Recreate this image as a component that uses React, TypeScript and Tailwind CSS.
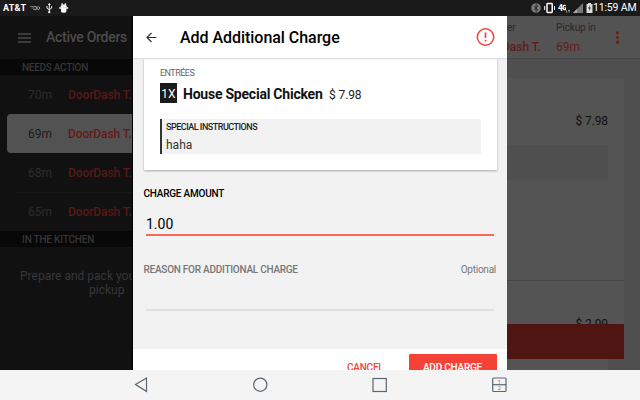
import React from "react";

function Order({ time, selected = false, last = false }: { time: string; selected?: boolean; last?: boolean }) {
  return (
    <div className={`ml-[7px] flex shrink-0 items-center whitespace-nowrap pl-[21px] ${last ? "h-[38px]" : "h-[39px]"} ${selected ? "rounded-l bg-[#525252]" : ""}`}>
      <span className={`w-10 shrink-0 text-[12px] ${selected ? "text-[#1a1a1a]" : "text-[#2d2d2d]"}`}>{time}</span>
      <span className={`text-[12px] font-medium tracking-[-0.1px] ${selected ? "text-[#651a16]" : "text-[#571a17]"}`}>DoorDash T.</span>
    </div>
  );
}

function StatusBar() {
  return (
    <header className="flex h-4 shrink-0 items-center bg-[#1a1a1a] pl-[3px] pr-[5px] text-white">
      <span className="w-[27px] pt-[1px] text-[9px] font-bold tracking-[0.2px]">AT&amp;T</span>
      <svg className="h-4 w-10" viewBox="30 0 40 16" fill="none" stroke="#fff">
        <path d="M30 6.500h6M31.500 8h4M33 9.500h3" stroke="#888" strokeWidth=".8" />
        <path d="M34.500 6.500h1.700q1.600 1.600 0 3.200h-1.200" stroke="#999" />
        <circle cx="38.300" cy="8.100" r="1.400" stroke="#999" />
        <path d="M49.300 4v8M47 6v2.300l2.300 1.400 2.300-1.500V6" strokeWidth=".9" />
        <path d="m47.800 5 1.500-2 1.500 2z" fill="#fff" stroke="none" />
        <circle cx="49.300" cy="12.200" r="1.100" fill="#fff" stroke="none" />
        <path d="M60.500 7q0-2.500 3.200-2.500T66.900 7zM61 7.600h5.400v3.800q0 1.400-2.700 1.400T61 11.400z" fill="#fff" stroke="none" />
        <path d="M59.200 8h9M61.600 3.500l1 1.200M65.800 3.500l-1 1.200" strokeWidth="1.400" />
      </svg>
      <svg className="ml-auto h-4 w-[36px]" viewBox="530 0 36 16" fill="none">
        <circle cx="536" cy="8" r="4.800" fill="#777" />
        <path d="m534.200 6.200 3.600 3.600-1.800 1.700v-7l1.800 1.700-3.600 3.600" stroke="#222" strokeWidth=".8" />
        <rect x="547" y="3.500" width="5.200" height="9" rx=".7" stroke="#fff" strokeWidth="1.500" />
        <path d="M544.700 6v4M554.500 6v4" stroke="#fff" />
        <text x="558" y="11" fill="#fff" fontSize="8.500" fontWeight="700" fontFamily="Roboto, sans-serif">4</text>
        <path d="M565.700 5.700q-2.700-1-2.700 1.800t2.700 2V7.800h-1.300" stroke="#fff" strokeWidth="1.300" />
      </svg>
      <svg className="h-4 w-[27px]" viewBox="566 0 27 16" fill="none">
        <path d="M566.300 10v2.300h1M568 10.500h2M569 10.500v2" stroke="#ccc" strokeWidth=".7" />
        <path d="M583 3v10h-10z" fill="#777" />
        <path d="M577 9v4h-4z" fill="#aaa" />
        <path d="M586.500 4h1.500V3h3v1h1.500v9h-6z" fill="#ddd" />
        <path d="m590 5-2 3.500h1.500l-.8 3 2.300-4h-1.500z" fill="#333" />
      </svg>
      <span className="w-[42px] whitespace-nowrap text-[10.500px] tracking-[-0.17px]">11:59 AM</span>
    </header>
  );
}

function Sidebar() {
  return (
    <aside className="flex w-[133px] shrink-0 flex-col overflow-hidden border-r border-black bg-[#111]">
      <div className="flex h-[43px] shrink-0 items-center whitespace-nowrap pl-[18px]">
        <svg className="h-[10px] w-[13px]" viewBox="0 0 13 10" stroke="#484848" strokeWidth="1.400"><path d="M0 1h13M0 5h13M0 9h13" /></svg>
        <span className="ml-[15px] text-[14px] font-medium tracking-[-0.28px] text-[#4b4b4b]">Active Orders</span>
      </div>
      <div className="flex h-4 shrink-0 items-center bg-[#080808] pl-[22px] text-[10px] font-medium tracking-[-0.28px] text-[#363636]">NEEDS ACTION</div>
      <Order time="70m" />
      <Order time="69m" selected />
      <Order time="68m" />
      <div className="ml-[17px] h-px shrink-0 bg-[#171717]" />
      <Order time="65m" last />
      <div className="flex h-4 shrink-0 items-center bg-[#080808] pl-[22px] text-[10px] font-medium tracking-[-0.2px] text-[#363636]">IN THE KITCHEN</div>
      <p className="ml-5 mt-[22px] whitespace-nowrap text-[12px] leading-[14px] text-[#373737]">
        Prepare and pack your<br /><span className="ml-[69px]">pickup</span>
      </p>
    </aside>
  );
}

function ChargeDialog() {
  return (
    <main className="flex w-[374px] shrink-0 flex-col overflow-hidden bg-[#f2f2f2]">
      <div className="z-10 flex h-[42px] shrink-0 items-center bg-white pl-[13px] pr-3 pt-[1px] shadow-[0_1px_1px_#ddd]">
        <svg className="h-[11px] w-[11px]" viewBox="0 0 11 11" fill="none" stroke="#333" strokeWidth="1.200"><path d="M10.500 5.500H1M5.500 1 1 5.500 5.500 10" /></svg>
        <h1 className="ml-[23px] whitespace-nowrap pt-[1px] text-[16px] font-medium tracking-[-0.04px] text-black">Add Additional Charge</h1>
        <svg className="ml-auto h-[19px] w-[19px]" viewBox="0 0 19 19" fill="none" stroke="#f44336"><circle cx="9.500" cy="9" r="8.200" strokeWidth="1.500" /><path d="M9.500 4.500v5.500M9.500 11.800v1.700" strokeWidth="1.700" /></svg>
      </div>
      <section className="mx-[10.500px] h-[112px] shrink-0 bg-white pl-[16.500px] pr-4 shadow-[0_1px_2px_#aaa]">
        <div className="pt-[9px] text-[9px] leading-3 tracking-[-0.52px] text-[#666]">ENTRÉES</div>
        <div className="mt-[4px] flex h-5 items-center whitespace-nowrap">
          <span className="flex h-5 w-[17px] items-center justify-center bg-[#1b1b1b] pt-[1px] text-[12px] text-white">1X</span>
          <strong className="ml-[6px] w-[146px] pt-[2px] text-[14px] font-bold tracking-[-0.23px] text-[#111]">House Special Chicken</strong>
          <span className="pt-[3px] text-[12px] tracking-[-0.1px] text-[#222]">$ 7.98</span>
        </div>
        <div className="mt-[16px] h-[35px] border-l-2 border-[#333] bg-[#f2f2f2] pl-[4px]">
          <div className="whitespace-nowrap pt-[2px] text-[9px] font-medium leading-3 tracking-[-0.5px] text-[#222]">SPECIAL INSTRUCTIONS</div>
          <div className="pt-[4px] text-[12px] leading-4 text-[#333]">haha</div>
        </div>
      </section>
      <label className="ml-[10.500px] mt-[17px] text-[10px] font-medium leading-[14px] tracking-[-0.22px] text-black">CHARGE AMOUNT</label>
      <div className="mx-[13px] mt-[13px] h-[22px] shrink-0 border-b-2 border-[#fa655c] text-[14px] leading-[21px] text-black">1.00</div>
      <div className="ml-[10.500px] mr-[11px] mt-[26px] flex h-[14px] shrink-0 items-center justify-between text-[10px] text-[#777]">
        <span className="font-medium tracking-[-0.25px]">REASON FOR ADDITIONAL CHARGE</span><span className="tracking-[-0.25px]">Optional</span>
      </div>
      <div className="mx-[13px] mt-[33px] h-[2px] shrink-0 bg-[#e0e0e0]" />
      <footer className="mt-auto flex h-[21px] shrink-0 items-start justify-end overflow-hidden bg-white pr-[10.500px] pt-[5px] text-[10px] font-medium tracking-[-0.22px] text-[#f44336]">
        <button className="mr-[25px] h-[26px] whitespace-nowrap pt-[1px]">CANCEL</button>
        <button className="h-[26px] w-[88px] shrink-0 whitespace-nowrap rounded-[1px] bg-[#f44336] pt-[1px] text-white">ADD CHARGE</button>
      </footer>
    </main>
  );
}

function OrderDetails() {
  return (
    <aside className="flex w-[133px] shrink-0 flex-col overflow-hidden bg-[#4f4f4f]">
      <div className="flex h-[42px] shrink-0 whitespace-nowrap bg-[#535353] text-[#292929] shadow-[0_1px_1px_#474747]">
        <div className="flex w-[49px] flex-col pt-[5px]">
          <span className="text-[10px] leading-[14px] tracking-[-0.1px]">er</span>
          <span className="-ml-[5px] pt-[4px] text-[12px] font-medium leading-4 text-[#651a16]">Dash T.</span>
        </div>
        <div className="flex w-[52px] flex-col pt-[5px]">
          <span className="text-[10px] leading-[14px] tracking-[-0.1px]">Pickup in</span>
          <span className="pt-[4px] text-[12px] leading-4 text-[#651a16]">69m</span>
        </div>
        <svg className="mt-[15px] h-[13px] w-[17px]" viewBox="0 0 17 13" fill="#6b1d19"><circle cx="9.500" cy="1.900" r="1.600" /><circle cx="9.500" cy="6.500" r="1.600" /><circle cx="9.500" cy="11.100" r="1.600" /></svg>
      </div>
      <section className="mr-4 mt-5 h-[203px] shrink-0 border-b border-[#454545] bg-[#545454] pr-4 pt-[35px]">
        <div className="text-right text-[12px] leading-4 tracking-[-0.1px] text-[#111]">$ 7.98</div>
        <div className="mt-4 h-[35px] bg-[#4f4f4f]" />
      </section>
      <div className="mr-4 h-[43px] shrink-0 overflow-hidden bg-[#545454] pr-4 pt-[35px] text-right text-[12px] leading-4 tracking-[-0.1px] text-[#111]">$ 2.99</div>
      <div className="mr-4 h-[35px] shrink-0 rounded-r-[1px] bg-[#4f1512]" />
      <div className="mr-8 grow bg-[#545454]" />
    </aside>
  );
}

function NavigationBar() {
  return (
    <nav className="h-[30px] shrink-0 bg-[#f4f4f4]">
      <svg className="h-[30px] w-[640px]" viewBox="0 0 640 30" fill="none" stroke="#596873" strokeWidth="1.200">
        <path d="M135.500 14.500 146.500 8v13.300z" />
        <circle cx="260.300" cy="14.700" r="6.600" />
        <rect x="373" y="8.500" width="13.300" height="13" />
        <rect x="492.700" y="8" width="13.300" height="13.500" rx="1" />
        <path d="M493 14.700h13" />
        <g fill="#68747c" stroke="none" fontSize="5.500" fontFamily="Roboto, sans-serif"><text x="497.700" y="13.500">1</text><text x="497.700" y="20.300">2</text></g>
      </svg>
    </nav>
  );
}

export default function App() {
  return (
    <div className="flex h-[400px] w-[640px] flex-col overflow-hidden font-['Roboto',sans-serif]">
      <StatusBar />
      <div className="flex h-[354px] shrink-0">
        <Sidebar />
        <ChargeDialog />
        <OrderDetails />
      </div>
      <NavigationBar />
    </div>
  );
}
